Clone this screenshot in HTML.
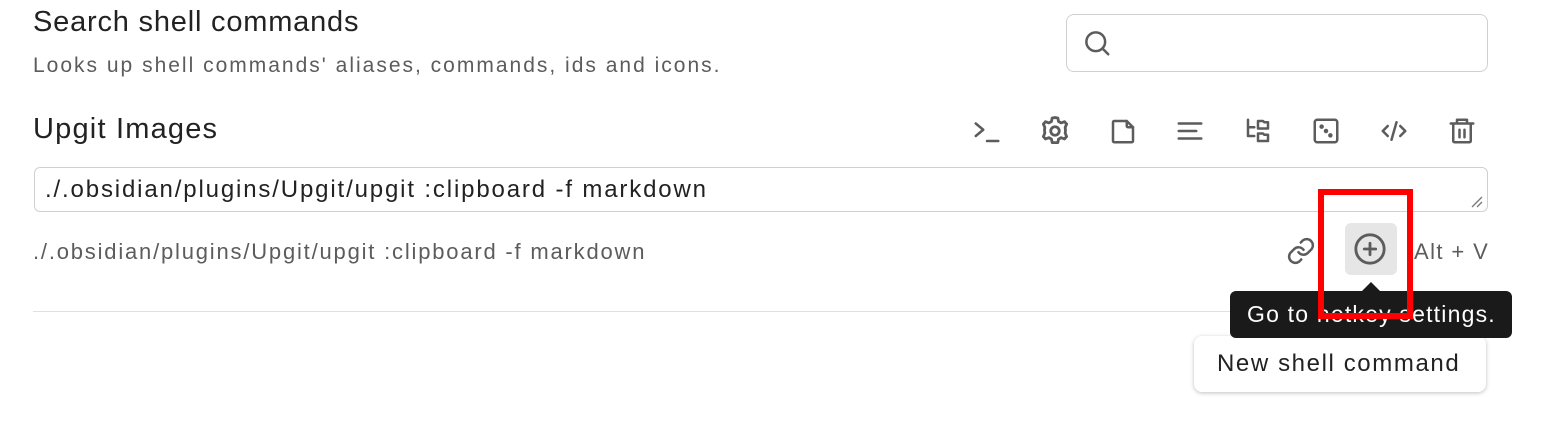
<!DOCTYPE html><html><head><style>
body{margin:0;width:1562px;height:428px;background:#fff;font-family:"Liberation Sans",sans-serif;position:relative;overflow:hidden;color:#222}
.a{position:absolute;white-space:nowrap}
svg.i{position:absolute;width:30px;height:30px;fill:none;stroke:#5c5c5c;stroke-width:2;stroke-linecap:round;stroke-linejoin:round}
</style></head><body>
<div class="a" style="left:33px;top:6px;font-size:29px;letter-spacing:0.8px;color:#222">Search shell commands</div>
<div class="a" style="left:33px;top:54px;font-size:21px;letter-spacing:2.0px;color:#5c5c5c">Looks up shell commands' aliases, commands, ids and icons.</div>
<div class="a" style="left:1066px;top:14px;width:420px;height:56px;border:1px solid #d0d0d0;border-radius:8px"></div>
<svg class="i" style="left:1082px;top:28px" viewBox="0 0 24 24"><circle cx="11" cy="11" r="7.5"/><path d="M16.5 16.5L21 21"/></svg>
<div class="a" style="left:33px;top:113px;font-size:29px;letter-spacing:1.2px">Upgit Images</div>
<svg class="i" style="left:972px;top:116px" viewBox="0 0 24 24"><path d="M3 6l6 5-6 5M12 20h9"/></svg>
<svg class="i" style="left:1038px;top:114px;width:34px;height:34px" viewBox="0 0 24 24"><path d="M12 2.5l2 .3.5 2.5 1.8 1 2.4-.9 1.5 1.7-1 2.4.2 2-.2 2 1 2.4-1.5 1.7-2.4-.9-1.8 1-.5 2.5h-4l-.5-2.5-1.8-1-2.4.9-1.5-1.7 1-2.4-.2-2 .2-2-1-2.4 1.5-1.7 2.4.9 1.8-1 .5-2.5z"/><circle cx="12" cy="12" r="3"/></svg>
<svg class="i" style="left:1108px;top:116px" viewBox="0 0 24 24"><path d="M4 5a1 1 0 0 1 1-1h10l5 5v11a1 1 0 0 1-1 1H5a1 1 0 0 1-1-1z"/><path d="M15 4v4a1 1 0 0 0 1 1h4"/></svg>
<svg class="i" style="left:1175px;top:116px" viewBox="0 0 24 24"><path d="M3 6h18M3 12h14M3 18h18"/></svg>
<svg class="i" style="left:1243px;top:116px" viewBox="0 0 24 24"><path d="M4 3v13h5M4 9h5"/><path d="M12 4h4l1 1h3v5h-8zM12 14h4l1 1h3v5h-8z"/></svg>
<svg class="i" style="left:1311px;top:116px" viewBox="0 0 24 24"><rect x="3" y="3" width="18" height="18" rx="2"/><circle cx="8.5" cy="8.5" r=".8" fill="#5c5c5c"/><circle cx="12" cy="12" r=".8" fill="#5c5c5c"/><circle cx="15.5" cy="15.5" r=".8" fill="#5c5c5c"/></svg>
<svg class="i" style="left:1379px;top:116px" viewBox="0 0 24 24"><path d="M7 8l-4 4 4 4M17 8l4 4-4 4M14 5l-4 14"/></svg>
<svg class="i" style="left:1447px;top:116px" viewBox="0 0 24 24"><path d="M3 6h18M8 6V3h8v3M5 6v14a1 1 0 0 0 1 1h12a1 1 0 0 0 1-1V6M10 11v6M14 11v6"/></svg>
<div class="a" style="left:34px;top:167px;width:1452px;height:43px;border:1px solid #d0d0d0;border-radius:6px"></div>
<div class="a" style="left:45px;top:176px;font-size:24px;letter-spacing:1.85px;color:#222">./.obsidian/plugins/Upgit/upgit :clipboard -f markdown</div>
<svg class="a" style="left:1470px;top:195px" width="14" height="14"><path d="M2 12L12 2M7 12L12 7" stroke="#777" stroke-width="1.3"/></svg>
<div class="a" style="left:33px;top:239px;font-size:22px;letter-spacing:1.8px;color:#5c5c5c">./.obsidian/plugins/Upgit/upgit :clipboard -f markdown</div>
<svg class="i" style="left:1286px;top:236px" viewBox="0 0 24 24"><path d="M10 13a5 5 0 0 0 7.5.5l3-3a5 5 0 0 0-7-7l-1.7 1.7M14 11a5 5 0 0 0-7.5-.5l-3 3a5 5 0 0 0 7 7l1.7-1.7"/></svg>
<div class="a" style="left:1345px;top:223px;width:52px;height:52px;background:#e6e6e6;border-radius:6px"></div>
<svg class="i" style="left:1353px;top:232px;width:34px;height:34px" viewBox="0 0 24 24"><circle cx="12" cy="12" r="10"/><path d="M12 8v8M8 12h8"/></svg>
<div class="a" style="left:1414px;top:239px;font-size:22px;letter-spacing:1.4px;color:#5c5c5c">Alt + V</div>
<div class="a" style="left:33px;top:311px;width:1455px;height:1px;background:#e0e0e0"></div>
<div class="a" style="left:1194px;top:336px;width:292px;height:56px;border-radius:8px;background:#fff;box-shadow:0 1px 4px rgba(0,0,0,.25)"></div>
<div class="a" style="left:1217px;top:350px;font-size:24px;letter-spacing:1.6px;color:#222">New shell command</div>
<div class="a" style="left:1361px;top:282px;width:0;height:0;border-left:10px solid transparent;border-right:10px solid transparent;border-bottom:10px solid #1a1a1a"></div>
<div class="a" style="left:1230px;top:291px;width:282px;height:47px;background:#1a1a1a;border-radius:6px"></div>
<div class="a" style="left:1247px;top:301px;font-size:23px;letter-spacing:1.2px;color:#fff">Go to hotkey settings.</div>
<div class="a" style="left:1318px;top:189px;width:83px;height:118px;border:6px solid #f00"></div>
</body></html>
